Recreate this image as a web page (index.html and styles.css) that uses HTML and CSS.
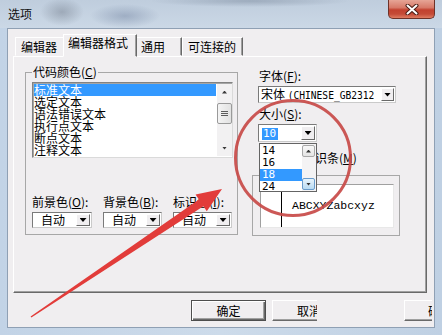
FILE: index.html
```html
<!DOCTYPE html>
<html>
<head>
<meta charset="utf-8">
<title>选项</title>
<link rel="stylesheet" href="styles.css">
</head>
<body>
<div class="win">
  <div class="titlebar">
    <span class="title">选项</span>
    <div class="close">
      <svg width="14" height="11" viewBox="0 0 14 11">
        <path d="M2.5 1.5 L11.5 9.5 M11.5 1.5 L2.5 9.5" stroke="#4a1c14" stroke-width="4" stroke-linecap="round"/>
        <path d="M2.5 1.5 L11.5 9.5 M11.5 1.5 L2.5 9.5" stroke="#ffffff" stroke-width="2" stroke-linecap="round"/>
      </svg>
    </div>
  </div>
  <div class="client">
    <div class="tabctl">
      <div class="tabstrip">
        <div class="tab t1">编辑器</div>
        <div class="tab t2 sel">编辑器格式</div>
        <div class="tab t3">通用</div>
        <div class="tab t4">可连接的</div>
      </div>
      <div class="pane">
        <fieldset class="grp gcolors">
          <legend>代码颜色(<u>C</u>)</legend>
          <div class="listbox">
            <div class="items">
              <div class="item sel">标准文本</div>
              <div class="item">选定文本</div>
              <div class="item">语法错误文本</div>
              <div class="item">执行点文本</div>
              <div class="item">断点文本</div>
              <div class="item">注释文本</div>
            </div>
            <div class="vscroll">
              <div class="sbtn"><i class="tri up"></i></div>
              <div class="thumb"><i class="grip"></i></div>
              <div class="track"></div>
              <div class="sbtn"><i class="tri dn"></i></div>
            </div>
          </div>
          <div class="colorrow">
            <div class="field f1">
              <div class="lbl">前景色(<u>O</u>):</div>
              <div class="combo cc"><span class="val">自动</span><span class="dbtn"><i class="tri big"></i></span></div>
            </div>
            <div class="field f2">
              <div class="lbl">背景色(<u>B</u>):</div>
              <div class="combo cc"><span class="val">自动</span><span class="dbtn"><i class="tri big"></i></span></div>
            </div>
            <div class="field f3">
              <div class="lbl">标识色(<u>I</u>):</div>
              <div class="combo cc"><span class="val">自动</span><span class="dbtn"><i class="tri big"></i></span></div>
            </div>
          </div>
        </fieldset>
        <div class="rcol">
          <div class="lbl">字体(<u>F</u>):</div>
          <div class="combo fontcombo"><span class="val fv">宋体 <span class="mono">(CHINESE_GB2312</span></span><span class="dbtn"><i class="tri big"></i></span></div>
          <div class="lbl sizelbl">大小(<u>S</u>):</div>
          <div class="sizewrap">
            <div class="combo sizecombo"><span class="val sv"><span class="hl">10</span></span><span class="dbtn"><i class="tri big"></i></span></div>
            <div class="droplist">
              <div class="ditems">
                <div class="ditem">14</div>
                <div class="ditem">16</div>
                <div class="ditem sel">18</div>
                <div class="ditem">24</div>
              </div>
              <div class="dscroll">
                <div class="dbtn2"><i class="tri up"></i></div>
                <div class="dtrack"></div>
                <div class="dbtn2 hot"><i class="tri dn"></i></div>
              </div>
            </div>
          </div>
          <div class="check"><span class="cbox"></span><span class="ctext">标识条(<u>M</u>)</span></div>
          <fieldset class="grp preview">
            <div class="pbox">
              <div class="pmargin"></div>
              <div class="sample">ABCXYZabcxyz</div>
            </div>
          </fieldset>
        </div>
      </div>
    </div>
    <div class="btnrow">
      <div class="btn ok">确定</div>
      <div class="btn cancel"><span>取消</span></div>
      <div class="btn third"><span>确</span></div>
    </div>
  </div>
  <svg class="annot" width="442" height="335" viewBox="0 0 442 335">
    <circle cx="293" cy="158" r="57.5" fill="none" stroke="#c84a48" stroke-width="3" opacity="0.92"/>
    <polygon points="31.4,317.6 203.4,206.2 206.8,211.2 222,189 195.6,194.6 198.9,199.6 30.6,316.4" fill="#e23c3a"/>
  </svg>
</div>
</body>
</html>
```

FILE: styles.css
```css
* { box-sizing: border-box; }
html, body { margin: 0; padding: 0; }
body {
  width: 442px;
  height: 335px;
  overflow: hidden;
  font-family: "Noto Sans CJK SC", "Liberation Sans", sans-serif;
  font-size: 12px;
  color: #000;
  background: #c3d3e4;
}
u { text-decoration: underline; text-underline-offset: 1px; }

.win {
  position: relative;
  width: 442px;
  height: 335px;
  background: linear-gradient(90deg, #c2d3e6, #cddbea 50%, #bfd0e3);
  display: flex;
  flex-direction: column;
}

.titlebar {
  height: 28px;
  display: flex;
  justify-content: space-between;
  align-items: flex-start;
  background:
    radial-gradient(ellipse 22px 14px at 62px 12px, rgba(110,120,135,.45), transparent),
    radial-gradient(ellipse 35px 12px at 125px 16px, rgba(100,118,150,.40), transparent),
    radial-gradient(ellipse 100px 6px at 250px 1px, rgba(115,130,150,.45), transparent),
    linear-gradient(180deg, #bfcddd, #cbd8e6);
}
.title { padding: 7px 0 0 8px; line-height: 14px; font-size: 12px; color: #111; }
.close {
  width: 47px;
  height: 19px;
  margin-right: 7px;
  border: 1px solid #6e3228;
  border-top: none;
  border-radius: 0 0 5px 5px;
  background: linear-gradient(180deg, #e6a596 0%, #d77a69 42%, #c2412f 55%, #c44b37 78%, #df7c62 100%);
  display: flex;
  align-items: center;
  justify-content: center;
}

.client {
  height: 300px;
  margin: 0 7px;
  background: #f0eef0;
  border: 1px solid #8fa0b4;
  display: flex;
  flex-direction: column;
}

.tabctl { margin: 5px 0 0 5px; width: 414px; }
.tabstrip {
  height: 22px;
  display: flex;
  align-items: flex-end;
  padding-left: 2px;
  position: relative;
  z-index: 1;
}
.tab {
  height: 19px;
  border: 1px solid;
  border-color: #ffffff #696969 transparent #ffffff;
  box-shadow: inset -1px 0 #a0a0a0;
  padding: 1px 0 0 5px;
  line-height: 15px;
  white-space: nowrap;
  background: #f0eef0;
}
.t1 { width: 50px; }
.t2 { width: 74px; height: 23px; margin: 0 -2px -1px -2px; position: relative; z-index: 2; padding-left: 4px; padding-top: 0; }
.t3 { width: 47px; }
.t4 { width: 61px; }

.pane {
  height: 237px;
  border: 1px solid;
  border-color: #ffffff #696969 #696969 #ffffff;
  box-shadow: inset -1px -1px #a0a0a0;
  display: flex;
  align-items: flex-start;
}

.grp {
  margin: 0;
  padding: 0;
  min-width: 0;
  border: 1px solid #a7a7a7;
}
.grp legend {
  padding: 0 1px;
  line-height: 12px;
  height: 12px;
  font-size: 12px;
}
.gcolors { margin: 9px 0 0 11px; width: 213px; padding: 0 4px 6px 6px; }

.listbox {
  margin-top: 4px;
  width: 201px;
  height: 76px;
  display: flex;
  border: 1px solid #828282;
  border-right-color: #dadada;
  border-bottom-color: #dadada;
  box-shadow: inset 1px 1px #a6a6a6;
  background: #fff;
  padding: 1px 0 1px 1px;
}
.items { flex: 1; padding-right: 1px; }
.item { height: 12px; line-height: 12px; white-space: nowrap; }
.item.sel { background: #3399ff; color: #fff; }

.vscroll {
  width: 15px;
  display: flex;
  flex-direction: column;
  background: #f2f1f2;
}
.sbtn { height: 16px; display: flex; align-items: center; justify-content: center; }
.thumb {
  margin-top: 3px;
  height: 21px;
  border: 1px solid #9a9a9a;
  border-radius: 2px;
  background: linear-gradient(90deg, #f4f4f4, #e2e2e2);
  display: flex;
  align-items: center;
  justify-content: center;
}
.grip {
  width: 7px;
  height: 5px;
  background: repeating-linear-gradient(180deg, #5c5c5c 0 1px, transparent 1px 2px);
}
.track { flex: 1; }

.tri { display: block; width: 5px; height: 3px; background: #3a3a3a; }
.tri.up { clip-path: polygon(50% 0, 100% 100%, 0 100%); }
.tri.dn { clip-path: polygon(0 0, 100% 0, 50% 100%); }
.tri.big { width: 7px; height: 4px; background: #000; clip-path: polygon(0 0, 100% 0, 50% 100%); }

.colorrow { margin-top: 38px; display: flex; gap: 11px; }
.field { display: flex; flex-direction: column; gap: 4px; }
.f1 { width: 60px; }
.f2, .f3 { width: 59px; }
.lbl { line-height: 12px; height: 12px; white-space: nowrap; }

.combo {
  border: 1px solid #7a7a7a;
  border-right-color: #cacaca;
  border-bottom-color: #cacaca;
  background: #fff;
  display: flex;
  align-items: center;
  justify-content: space-between;
  overflow: hidden;
}
.cc { height: 16px; }
.val { line-height: 12px; white-space: nowrap; }
.cc .val { padding-left: 8px; }
.dbtn {
  width: 14px;
  height: 12px;
  margin-right: 1px;
  border: 1px solid;
  border-color: #ffffff #696969 #696969 #ffffff;
  background: #f0eef0;
  display: flex;
  align-items: center;
  justify-content: center;
  flex: none;
}

.rcol {
  margin-left: 14px;
  width: 148px;
  padding-top: 13px;
  display: flex;
  flex-direction: column;
  align-items: flex-start;
}
.rcol > .lbl { margin-left: 7px; }
.fontcombo { margin: 4px 0 0 6px; width: 138px; height: 17px; }
.fontcombo .dbtn { width: 13px; height: 13px; }
.fv { padding-left: 2px; overflow: hidden; }
.mono { font-family: "DejaVu Sans Mono", monospace; font-size: 9.6px; }
.sizelbl { margin-top: 5px; }
.sizewrap { position: relative; margin: 4px 0 0 6px; }
.sizecombo { width: 59px; height: 18px; }
.sizecombo .dbtn { height: 14px; }
.sv { padding-left: 3px; }
.hl {
  background: #3399ff;
  color: #fff;
  padding: 0 2px 0 1px;
  font-family: "DejaVu Sans Mono", monospace;
  font-size: 11px;
  line-height: 12px;
  display: inline-block;
}

.droplist {
  position: absolute;
  left: 1px;
  top: 19px;
  width: 58px;
  height: 49px;
  border: 1px solid #646464;
  background: #fff;
  display: flex;
  z-index: 3;
}
.ditems { flex: 1; padding-top: 1px; }
.ditem {
  height: 12px;
  line-height: 12px;
  padding-left: 2px;
  font-family: "DejaVu Sans Mono", monospace;
  font-size: 11px;
}
.ditem.sel { background: #3399ff; color: #fff; }
.dscroll {
  width: 14px;
  display: flex;
  flex-direction: column;
  padding: 1px 1px 1px 0;
  background: #f4f3f4;
}
.dbtn2 {
  height: 12px;
  border: 1px solid #a8a8a8;
  border-radius: 2px;
  background: linear-gradient(180deg, #f8f8f8, #e4e4e4);
  display: flex;
  align-items: center;
  justify-content: center;
}
.dbtn2.hot { border-color: #6a9ccc; background: linear-gradient(180deg, #e8f4fc, #b8daf2); }
.dbtn2 .tri { background: #333; }
.dtrack { flex: 1; }

.check { margin: 10px 0 0 34px; display: flex; align-items: center; gap: 4px; height: 12px; }
.cbox { width: 13px; height: 13px; border: 1px solid #8e8f8f; background: #fff; }
.ctext { line-height: 12px; white-space: nowrap; }

.preview { margin-top: 11px; width: 148px; height: 61px; padding: 8px 0 0 7px; }
.pbox {
  width: 134px;
  height: 44px;
  border: 1px solid #a0a0a0;
  border-right-color: #e8e8e8;
  border-bottom-color: #e8e8e8;
  background: #fff;
  display: flex;
  align-items: center;
}
.pmargin { align-self: stretch; width: 21px; border-right: 1px solid #000; }
.sample {
  padding-left: 10px;
  font-family: "Liberation Mono", monospace;
  font-size: 11.5px;
  line-height: 12px;
  white-space: nowrap;
}

.btnrow { display: flex; margin-top: 7px; padding-left: 183px; }
.btn {
  height: 21px;
  background: #f0eef0;
  line-height: 19px;
  white-space: nowrap;
  overflow: hidden;
}
.ok {
  width: 75px;
  text-align: center;
  border: 1px solid #4d4d4d;
  box-shadow: inset 1px 1px #ffffff, inset -1px -1px #696969, inset -2px -2px #a0a0a0;
}
.cancel {
  width: 45px;
  margin-left: 6px;
  border-top: 1px solid #ffffff;
  border-left: 1px solid #ffffff;
  border-bottom: 1px solid #696969;
  padding-left: 24px;
  box-shadow: inset 0 -1px #a0a0a0;
}
.third {
  width: 28px;
  margin-left: 87px;
  border-top: 1px solid #ffffff;
  border-left: 1px solid #ffffff;
  border-bottom: 1px solid #696969;
  padding-left: 23px;
  box-shadow: inset 0 -1px #a0a0a0;
}

.annot { position: absolute; left: 0; top: 0; pointer-events: none; z-index: 10; }
```
